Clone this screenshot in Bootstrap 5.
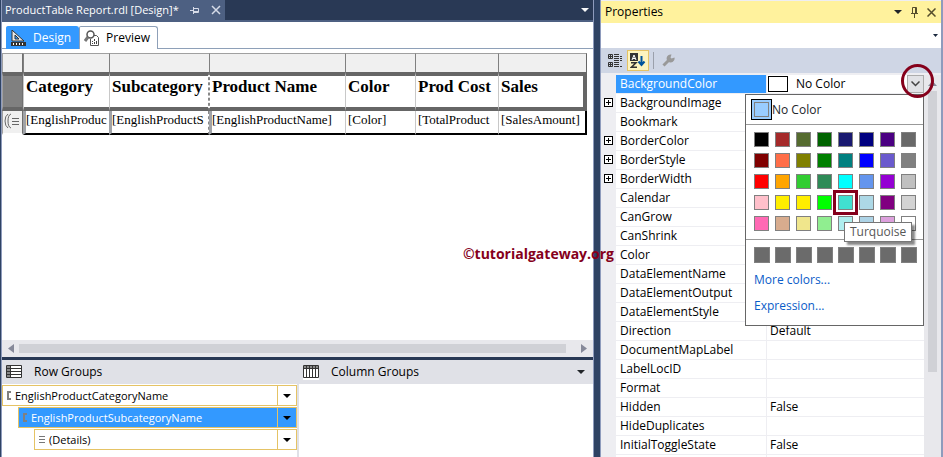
<!DOCTYPE html>
<html lang="en">
<head>
<meta charset="utf-8">
<meta name="viewport" content="width=device-width, initial-scale=1">
<title>ProductTable Report.rdl [Design]</title>
<link href="https://cdn.jsdelivr.net/npm/bootstrap@5.3.0/dist/css/bootstrap.min.css" rel="stylesheet">
<style>
  body { font: 12px/18px "Open Sans", "Noto Sans", sans-serif; color: #000; background: #2f4364; }
  button { color: inherit; }
  svg { display: block; flex: none; }
  .shell { height: 100vh; padding-left: 1px; }
  .designer { border: solid #8e9bbc; border-width: 0 1px; min-width: 0; background: #fff; }
  .doc-bar { height: 22px; background: #293955; border-bottom: 2px solid #4d6082; }
  .doc-tab { width: 223px; background: #4d6082; color: #fff; padding-left: 3px; font-size: 11px; }
  .mode-tabs { height: 27px; margin-bottom: 4px; padding: 4px 0 0 4px; border-bottom: 1px solid #8ea0b8; }
  .mode-tab { height: 23px; gap: 6px; padding: 0 7px 0 4px; border: 1px solid #8ea0b8; border-bottom: 0; background: #fff; border-radius: 2px 3px 0 0; }
  .mode-tab.on { background: #3399ff; color: #fff; border-color: #3399ff; }

  .report { table-layout: fixed; width: 585px; border-collapse: separate; border-spacing: 0; }
  .report td, .report th { padding: 0 0 0 2px; overflow: hidden; white-space: nowrap; vertical-align: top; border-left: 1px solid #c8c8c8; }
  .report .ruler td { height: 19px; background: #f0f0f0; border-left-color: #808080; border-top: 1px solid #a0a0a0; }
  .report .ruler td:last-child { border-right: 1px solid #666; }
  .report .titles > * { height: 39px; border-top: 4px solid #666; border-bottom: 4px solid #666; }
  .report th { font-family: "Liberation Serif", serif; font-size: 17px; line-height: 22px; }
  .report .titles > :last-child { border-right: 4px solid #666; }
  .report .values td { height: 24px; font: 13px/18px "Liberation Serif", serif; border-bottom: 2px solid #000; }
  .report .values td:last-child { border-right: 2px solid #000; }
  .report tr > td:first-child { padding: 0; border-left: 1px solid #a0a0a0; border-right: 1px solid #707070; }
  .report .titles > td:first-child { background: #808080; }
  .report .values > td:first-child { background: #f0f0f0; border-bottom-color: #fff; }
  .report .values .grouped { border-left: 3px solid #a0a3a8; padding-left: 0; }
  .report .split { border-right: 1px dashed #888; }
  .report .titles .split + th { border-left: 1px dashed #888; }

  .hscroll { height: 17px; background: #e8e8ec; padding: 0 6px; }
  .hscroll .thumb { height: 9px; margin: 0 15px 0 5px; background: #d0d1d6; }
  .group-head { height: 27px; border-top: 3px solid #293955; background: #e0e1e7; }
  .group-body { height: 73px; }
  .row-groups { width: 297px; padding-top: 1px; border-right: 2px solid #e0e1e7; }
  .group-item { height: 21px; margin-bottom: 1px; border: 1px solid #e5c365; background: #fff; font-size: 11px; }
  .group-item.on { background: #3399ff; color: #fff; }
  .level-1 { margin-left: 16px; }
  .level-2 { margin-left: 32px; }
  .group-item button { width: 19px; color: #000; border-left: 1px solid #e5c365; }
  .caret { width: 0; height: 0; border: 4px solid transparent; border-top-color: currentColor; border-bottom: 0; }
  .bracket { width: 4px; height: 9px; border: 2px solid #808080; border-right: 0; }

  .props { width: 343px; margin-left: 6px; padding-top: 1px; border-left: 1px solid #8e9bbc; border-right: 2px solid #8e9bbc; background: #eeeef2; }
  .props-title { height: 22px; background: #fff29d; padding: 0 5px 0 4px; }
  .props-object { height: 25px; background: #fff; padding-right: 3px; }
  .props-tools { height: 25px; background: #cfd6e5; padding-left: 7px; }
  .tool-on { width: 22px; height: 21px; border: 1px solid #e5c365; background: #fdf4bf; }
  .grid-wrap { padding: 2px 17px 0 0; background: #eeeef2; }
  .prop-grid { table-layout: fixed; width: 100%; border-collapse: separate; border-spacing: 0; }
  .prop-grid th, .prop-grid td { height: 19px; padding: 0 0 1px 4px; line-height: 16px; font-weight: 400; background: #fff; border-bottom: 1px solid #eeeef2; white-space: nowrap; }
  .prop-grid th { border-right: 1px solid #eeeef2; }
  .prop-grid td { padding-left: 3px; }
  .prop-grid td:first-child { background: #eeeef2; }
  .prop-grid .chosen { background: #3399ff; color: #fff; }
  .prop-grid .with-drop { padding: 0 0 0 1px; }
  .expander { width: 9px; height: 9px; border: 1px solid #000; background: #fff; }
  .no-swatch { width: 20px; height: 16px; border: 1px solid #000; }
  .drop { width: 17px; height: 18px; background: #e1e2e6; border: 1px solid #acacac; }
  .vscroll { top: 2px; right: 0; bottom: 0; width: 17px; background: #e8e8ec; }
  .vscroll .thumb { width: 9px; height: 281px; background: #d0d1d6; }

  .picker { top: 21px; right: 17px; width: 179px; height: 232px; background: #fff; border: 1px solid #666; }
  .none-choice { height: 30px; font-size: 12px; border-bottom: 1px solid #999; }
  .none-box { width: 21px; height: 21px; margin-left: 5px; padding: 2px; border: 1px solid #000; background: #99ccff; }
  .none-box span { display: block; height: 15px; border: 1px solid #808080; }
  .swatches { display: grid; grid-template-columns: repeat(8, 15px); gap: 6px; padding: 7px 0 8px 8px; }
  .swatches button { width: 15px; height: 15px; padding: 0; border: 1px solid #808080; }
  .swatches button.aimed { outline: 3px solid #85001b; outline-offset: 2px; }
  .recent { border-top: 1px solid #999; }
  .recent button { background: #6b6b6b; width: 16px; height: 16px; }
  .picker a { color: #0a5cc8; text-decoration: none; margin-left: 8px; }
  .hint { left: 98px; top: 127px; padding: 0 5px; border: 1px solid #767676; background: #fff; color: #575757; box-shadow: 3px 3px 2px #0007; }
  .ring { width: 33px; height: 34px; top: -9px; right: 7px; border: 3px solid #85001b; border-radius: 50%; pointer-events: none; }
  .credit { top: 244px; right: 329px; color: #85001b; font: bold 14px/20px "Open Sans", sans-serif; }
</style>
<script src="https://cdn.jsdelivr.net/npm/bootstrap@5.3.0/dist/js/bootstrap.bundle.min.js"></script>
</head>
<body class="overflow-hidden">
<div class="shell d-flex position-relative overflow-hidden">
  <main class="designer d-flex flex-column flex-grow-1">
    <div class="doc-bar d-flex justify-content-between align-items-center flex-shrink-0">
      <div class="doc-tab d-flex align-items-center h-100">
        <span class="text-nowrap">ProductTable Report.rdl [Design]*</span>
        <button class="btn p-0 border-0 ms-auto me-2" aria-label="Pin"><svg width="9" height="9" fill="none" stroke="#d6dbe8"><path d="M0 4.500h3M3.500 1v7M4 2.500h4.500v4H4M4 5.500h4"/></svg></button>
        <button class="btn p-0 border-0 ms-1 me-1" aria-label="Close"><svg width="10" height="10" stroke="#d6dbe8" stroke-width="1.500"><path d="M1 1l8 8M9 1l-8 8"/></svg></button>
      </div>
      <button class="btn p-0 border-0 me-1" aria-label="Open documents"><span class="caret d-block text-light"></span></button>
    </div>

    <div class="mode-tabs d-flex flex-shrink-0">
      <button class="mode-tab on d-flex align-items-center" type="button">
        <svg width="16" height="16"><path d="M1 0v11h12z" fill="#e8e8e8" stroke="#333"/><path d="M4 5v4h4z" fill="#39f" stroke="#333"/><path d="M0 12h15v4H0z" fill="#333"/><path d="M2.500 13v2M5.500 13v2M8.500 13v2M11.500 13v2" stroke="#fff"/></svg>
        Design</button>
      <button class="mode-tab d-flex align-items-center" type="button">
        <svg width="16" height="16" fill="none"><circle cx="6.500" cy="4.500" r="3.500" stroke="#555" stroke-width="1.500"/><path d="M4 7l-3 4" stroke="#777" stroke-width="3"/><path d="M10 5.500h2.500l2 2v8h-8V9" stroke="#555"/><path d="M8.500 11v1M8.500 13v1M10.500 9v2M10.500 12v2M12.500 11v3" stroke="#444"/></svg>
        Preview</button>
    </div>

    <table class="report flex-shrink-0">
      <colgroup><col style="width:21px"><col style="width:86px"><col style="width:100px"><col style="width:136px"><col style="width:70px"><col style="width:83px"><col></colgroup>
      <tbody>
        <tr class="ruler"><td></td><td></td><td></td><td></td><td></td><td></td><td></td></tr>
        <tr class="titles"><td></td><th>Category</th><th class="split">Subcategory</th><th>Product Name</th><th>Color</th><th>Prod Cost</th><th>Sales</th></tr>
        <tr class="values"><td><svg width="18" height="20" fill="none" stroke="#666"><path d="M5 3q-3 2-3 7t3 7M8 3q-3 1-3 7t3 7M9 7.500h7M9 10.500h7M9 13.500h7"/></svg></td><td class="grouped">[EnglishProduc</td><td class="grouped split">[EnglishProductS</td><td class="grouped">[EnglishProductName]</td><td>[Color]</td><td>[TotalProduct</td><td>[SalesAmount]</td></tr>
      </tbody>
    </table>

    <div class="hscroll d-flex align-items-center flex-shrink-0 mt-auto">
      <svg width="6" height="9"><path d="M6 0v9L0 4.500z" fill="#868999"/></svg>
      <div class="thumb flex-grow-1"></div>
      <svg width="6" height="9"><path d="M0 0v9l6-4.500z" fill="#868999"/></svg>
    </div>
    <div class="group-head d-flex align-items-center flex-shrink-0">
      <div class="row-groups border-0 p-0 d-flex align-items-center flex-shrink-0">
        <svg class="ms-1 me-2" width="16" height="14"><path d="M.500.500h15v12H.500z" fill="#fff" stroke="#333"/><path d="M1 1h3v11H1z" fill="#888"/><path d="M1 3.500h14M1 6.500h14M1 9.500h14M4.500 1v11" stroke="#333"/></svg>
        <span class="ms-1">Row Groups</span>
      </div>
      <svg class="ms-1 me-2" width="16" height="15"><path d="M0 0h16v15H0z" fill="#fff"/><path d="M.500.500h15v12H.500z" fill="#fff" stroke="#333"/><path d="M1 1h14v2H1z" fill="#888"/><path d="M3.500 1v11M6.500 1v11M9.500 1v11M12.500 1v11M1 3.500h14" stroke="#333"/></svg>
      <span class="ms-1">Column Groups</span>
      <button class="btn p-0 border-0 ms-auto me-2" aria-label="Group options"><span class="caret d-block"></span></button>
    </div>
    <div class="group-body d-flex flex-shrink-0">
      <div class="row-groups flex-shrink-0">
        <div class="group-item d-flex align-items-center"><span class="bracket ms-1 me-1"></span>EnglishProductCategoryName<button class="btn rounded-0 border-top-0 border-end-0 border-bottom-0 p-0 h-100 ms-auto d-flex align-items-center justify-content-center" aria-label="Category group menu"><span class="caret"></span></button></div>
        <div class="group-item on level-1 d-flex align-items-center"><span class="bracket ms-1 me-1"></span>EnglishProductSubcategoryName<button class="btn rounded-0 border-top-0 border-end-0 border-bottom-0 p-0 h-100 ms-auto d-flex align-items-center justify-content-center" aria-label="Subcategory group menu"><span class="caret"></span></button></div>
        <div class="group-item level-2 d-flex align-items-center"><svg class="mx-1" width="6" height="7" stroke="#777"><path d="M0 .500h6M0 3.500h6M0 6.500h6"/></svg>(Details)<button class="btn rounded-0 border-top-0 border-end-0 border-bottom-0 p-0 h-100 ms-auto d-flex align-items-center justify-content-center" aria-label="Details group menu"><span class="caret"></span></button></div>
      </div>
    </div>
  </main>

  <aside class="props d-flex flex-column flex-shrink-0">
    <div class="props-title d-flex align-items-center gap-2 flex-shrink-0">
      <span class="me-auto">Properties</span>
      <button class="btn p-0 border-0" aria-label="Window position"><span class="caret d-block"></span></button>
      <button class="btn p-0 border-0" aria-label="Auto hide"><svg width="9" height="11" fill="none" stroke="#554d2b"><path d="M2.500 6V.500h4V6M5.500 1v5M1 6.500h7M4.500 7v4"/></svg></button>
      <button class="btn p-0 border-0" aria-label="Close properties"><svg width="9" height="9" stroke="#554d2b" stroke-width="1.500"><path d="M.500.500l8 8M8.500.500l-8 8"/></svg></button>
    </div>
    <div class="props-object d-flex align-items-center justify-content-end flex-shrink-0"><button class="btn p-0 border-0" aria-label="Choose object"><svg width="5" height="3"><path d="M0 0h5L2.500 3z" fill="#1b293e"/></svg></button></div>
    <div class="props-tools d-flex align-items-center flex-shrink-0">
      <button class="btn p-0 border-0" aria-label="Categorized"><svg width="15" height="15" fill="none" stroke="#333"><path d="M.500 1.500h4v4h-4zM.500 9.500h4v4h-4zM1 3.500h3M2.500 2v3M1 11.500h3M2.500 10v3M6 1.500h5M6 3.500h5M6 5.500h5M6 7.500h5M6 9.500h5M6 11.500h5M6 13.500h5M12 3.500h2M12 5.500h2M12 7.500h2M12 13.500h2"/></svg></button>
      <button class="btn tool-on rounded-0 p-0 ms-1 d-flex align-items-center justify-content-center" aria-label="Alphabetical"><svg width="16" height="16" fill="none"><path d="M0 0h8v8H0z" fill="#333"/><path d="M2 7l2-5 2 5M3 5.500h2" stroke="#fff"/><path d="M1 9.800h5L1.500 14.200H7" stroke="#333" stroke-width="1.500"/><path d="M11.500 3v9M8.500 8.500l3 3.500 3-3.500" stroke="#00539c" stroke-width="2"/></svg></button>
      <span class="vr mx-1 my-1"></span>
      <button class="btn p-0 border-0 ms-1" aria-label="Property pages"><svg width="13" height="13"><path d="M1.500 11.500l6-6" stroke="#999" stroke-width="3"/><path d="M12.500 3.500l-3 1-1-1 1-3a4 4 0 1 0 3 3z" fill="#999"/></svg></button>
    </div>

    <div class="grid-wrap position-relative flex-grow-1">
      <table class="prop-grid">
        <colgroup><col style="width:15px"><col style="width:151px"><col></colgroup>
        <tbody>
          <tr><td></td><th class="chosen" scope="row">BackgroundColor</th><td class="with-drop"><div class="d-flex align-items-center"><span class="no-swatch me-2"></span>No Color<button class="btn drop rounded-0 p-0 ms-auto d-flex align-items-center justify-content-center" aria-label="Choose color"><svg width="9" height="6" fill="none" stroke="#444" stroke-width="1.500"><path d="M.500.500l4 4 4-4"/></svg></button></div></td></tr>
          <tr><td><button class="btn expander rounded-0 p-0 d-block" aria-label="Expand BackgroundImage"><svg width="7" height="7" stroke="#000"><path d="M1 3.500h5M3.500 1v5"/></svg></button></td><th scope="row">BackgroundImage</th><td></td></tr>
          <tr><td></td><th scope="row">Bookmark</th><td></td></tr>
          <tr><td><button class="btn expander rounded-0 p-0 d-block" aria-label="Expand BorderColor"><svg width="7" height="7" stroke="#000"><path d="M1 3.500h5M3.500 1v5"/></svg></button></td><th scope="row">BorderColor</th><td></td></tr>
          <tr><td><button class="btn expander rounded-0 p-0 d-block" aria-label="Expand BorderStyle"><svg width="7" height="7" stroke="#000"><path d="M1 3.500h5M3.500 1v5"/></svg></button></td><th scope="row">BorderStyle</th><td></td></tr>
          <tr><td><button class="btn expander rounded-0 p-0 d-block" aria-label="Expand BorderWidth"><svg width="7" height="7" stroke="#000"><path d="M1 3.500h5M3.500 1v5"/></svg></button></td><th scope="row">BorderWidth</th><td></td></tr>
          <tr><td></td><th scope="row">Calendar</th><td></td></tr>
          <tr><td></td><th scope="row">CanGrow</th><td></td></tr>
          <tr><td></td><th scope="row">CanShrink</th><td></td></tr>
          <tr><td></td><th scope="row">Color</th><td></td></tr>
          <tr><td></td><th scope="row">DataElementName</th><td></td></tr>
          <tr><td></td><th scope="row">DataElementOutput</th><td></td></tr>
          <tr><td></td><th scope="row">DataElementStyle</th><td></td></tr>
          <tr><td></td><th scope="row">Direction</th><td>Default</td></tr>
          <tr><td></td><th scope="row">DocumentMapLabel</th><td></td></tr>
          <tr><td></td><th scope="row">LabelLocID</th><td></td></tr>
          <tr><td></td><th scope="row">Format</th><td></td></tr>
          <tr><td></td><th scope="row">Hidden</th><td>False</td></tr>
          <tr><td></td><th scope="row">HideDuplicates</th><td></td></tr>
          <tr><td></td><th scope="row">InitialToggleState</th><td>False</td></tr>
          <tr><td></td><th scope="row"></th><td></td></tr>
        </tbody>
      </table>
      <div class="vscroll position-absolute d-flex flex-column align-items-center">
        <svg class="my-1" width="9" height="8"><path d="M0 7l4.500-5L9 7z" fill="#868999"/></svg>
        <div class="thumb"></div>
      </div>
      <div class="picker position-absolute">
        <button class="btn none-choice rounded-0 border-top-0 border-start-0 border-end-0 p-0 w-100 d-flex align-items-center"><span class="none-box"><span></span></span>No Color</button>
        <div class="swatches" id="palette"></div>
        <div class="swatches recent" id="recent"></div>
        <a class="d-block mb-2" href="#">More colors...</a>
        <a class="d-block" href="#">Expression...</a>
        <div class="hint position-absolute" role="tooltip">Turquoise</div>
      </div>
      <div class="ring position-absolute"></div>
    </div>
  </aside>
  <div class="credit position-absolute">©tutorialgateway.org</div>
</div>
<script>
  const palette = "Black Brown DarkOliveGreen DarkGreen MidnightBlue Navy Indigo DimGray Maroon Coral Olive Green Teal Blue SlateBlue Gray Red Orange LimeGreen SeaGreen Cyan CornflowerBlue DarkViolet Silver Pink Gold Yellow Lime Turquoise LightBlue Purple LightGray HotPink Tan Khaki LightGreen PaleTurquoise LightSteelBlue Plum White".split(" ");
  const shades = { Coral: "#ff6e48", Gold: "#ffee00", Yellow: "#ffee00", Tan: "#d8ac8e", LightSteelBlue: "#add3e6" };
  function addSwatch(host, name, fill) {
    const b = document.createElement("button");
    b.type = "button";
    b.setAttribute("aria-label", name);
    if (fill) b.style.backgroundColor = fill;
    if (name === "Turquoise") b.className = "aimed";
    host.append(b);
  }
  palette.forEach(n => addSwatch(document.getElementById("palette"), n, shades[n] || n));
  for (let i = 1; i <= 8; i++) addSwatch(document.getElementById("recent"), "Recent color " + i);
</script>
</body>
</html>
